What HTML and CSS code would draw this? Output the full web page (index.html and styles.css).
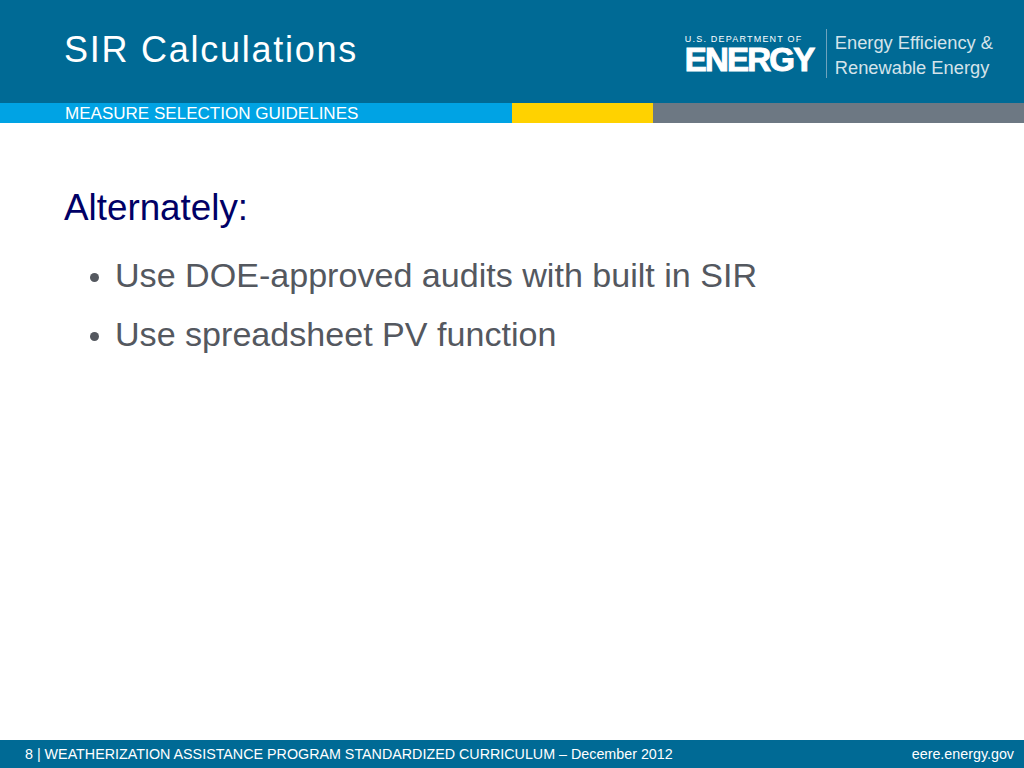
FILE: index.html
```html
<!DOCTYPE html>
<html lang="en">
<head>
<meta charset="utf-8">
<title>SIR Calculations</title>
<link rel="stylesheet" href="styles.css">
</head>
<body>
<div class="slide">
  <header class="header">
    <h1 class="title">SIR Calculations</h1>
    <div class="logo">
      <div class="doe">
        <div class="doe-top">U.S. DEPARTMENT OF</div>
        <div class="doe-main">ENERGY</div>
      </div>
      <div class="eere">Energy Efficiency &amp;<br>Renewable Energy</div>
    </div>
  </header>
  <div class="band">
    <div class="band-blue">MEASURE SELECTION GUIDELINES</div>
    <div class="band-yellow"></div>
    <div class="band-gray"></div>
  </div>
  <main class="content">
    <h2 class="heading">Alternately:</h2>
    <ul class="list">
      <li>Use DOE-approved audits with built in SIR</li>
      <li>Use spreadsheet PV function</li>
    </ul>
  </main>
  <footer class="footer">
    <span>8 | WEATHERIZATION ASSISTANCE PROGRAM STANDARDIZED CURRICULUM – December 2012</span>
    <span>eere.energy.gov</span>
  </footer>
</div>
</body>
</html>
```
FILE: styles.css
```css
html, body { margin: 0; padding: 0; }
body { font-family: "Liberation Sans", Arial, sans-serif; background: #fff; }
.slide { width: 1024px; height: 768px; display: flex; flex-direction: column; overflow: hidden; }
.header { height: 103px; background: #006a95; display: flex; justify-content: space-between; padding: 0 31px 0 64px; box-sizing: border-box; }
.title { margin: 28px 0 0; font-size: 36px; line-height: 44px; font-weight: 400; color: #fff; letter-spacing: 1.75px; height: 44px; }
.logo { display: flex; margin-top: 29px; height: 49px; }
.doe { width: 129px; padding-right: 12px; border-right: 1px solid #6fa3bd; color: #fff; }
.doe-top { font-size: 9px; line-height: 10px; letter-spacing: 1.2px; margin-top: 5px; white-space: nowrap; }
.doe-main { font-size: 33px; line-height: 30px; font-weight: 700; letter-spacing: -1.8px; -webkit-text-stroke: 1px #fff; margin-top: 1px; }
.eere { padding-left: 8px; padding-top: 2px; font-size: 18.3px; line-height: 24.5px; color: #d5e3ea; }
.band { height: 20px; display: flex; }
.band-blue { width: 512px; background: #00a3e4; color: #fff; font-size: 17.05px; line-height: 21px; padding-left: 65px; box-sizing: border-box; }
.band-yellow { width: 141px; background: #ffd200; }
.band-gray { flex: 1; background: #6d7883; }
.content { flex: 1; padding: 63px 0 0 64px; }
.heading { margin: 0; font-size: 36.8px; line-height: 44px; font-weight: 400; color: #000066; }
.list { margin: 23px 0 0; padding: 0 0 0 51px; font-size: 34.1px; line-height: 44px; color: #54585f; }
.list li { margin-bottom: 15px; }
.list li::marker { font-size: 30px; }
.footer { height: 28px; background: #006a95; color: #fff; font-size: 14.3px; line-height: 28px; display: flex; justify-content: space-between; padding: 0 10px 0 25px; }
```
